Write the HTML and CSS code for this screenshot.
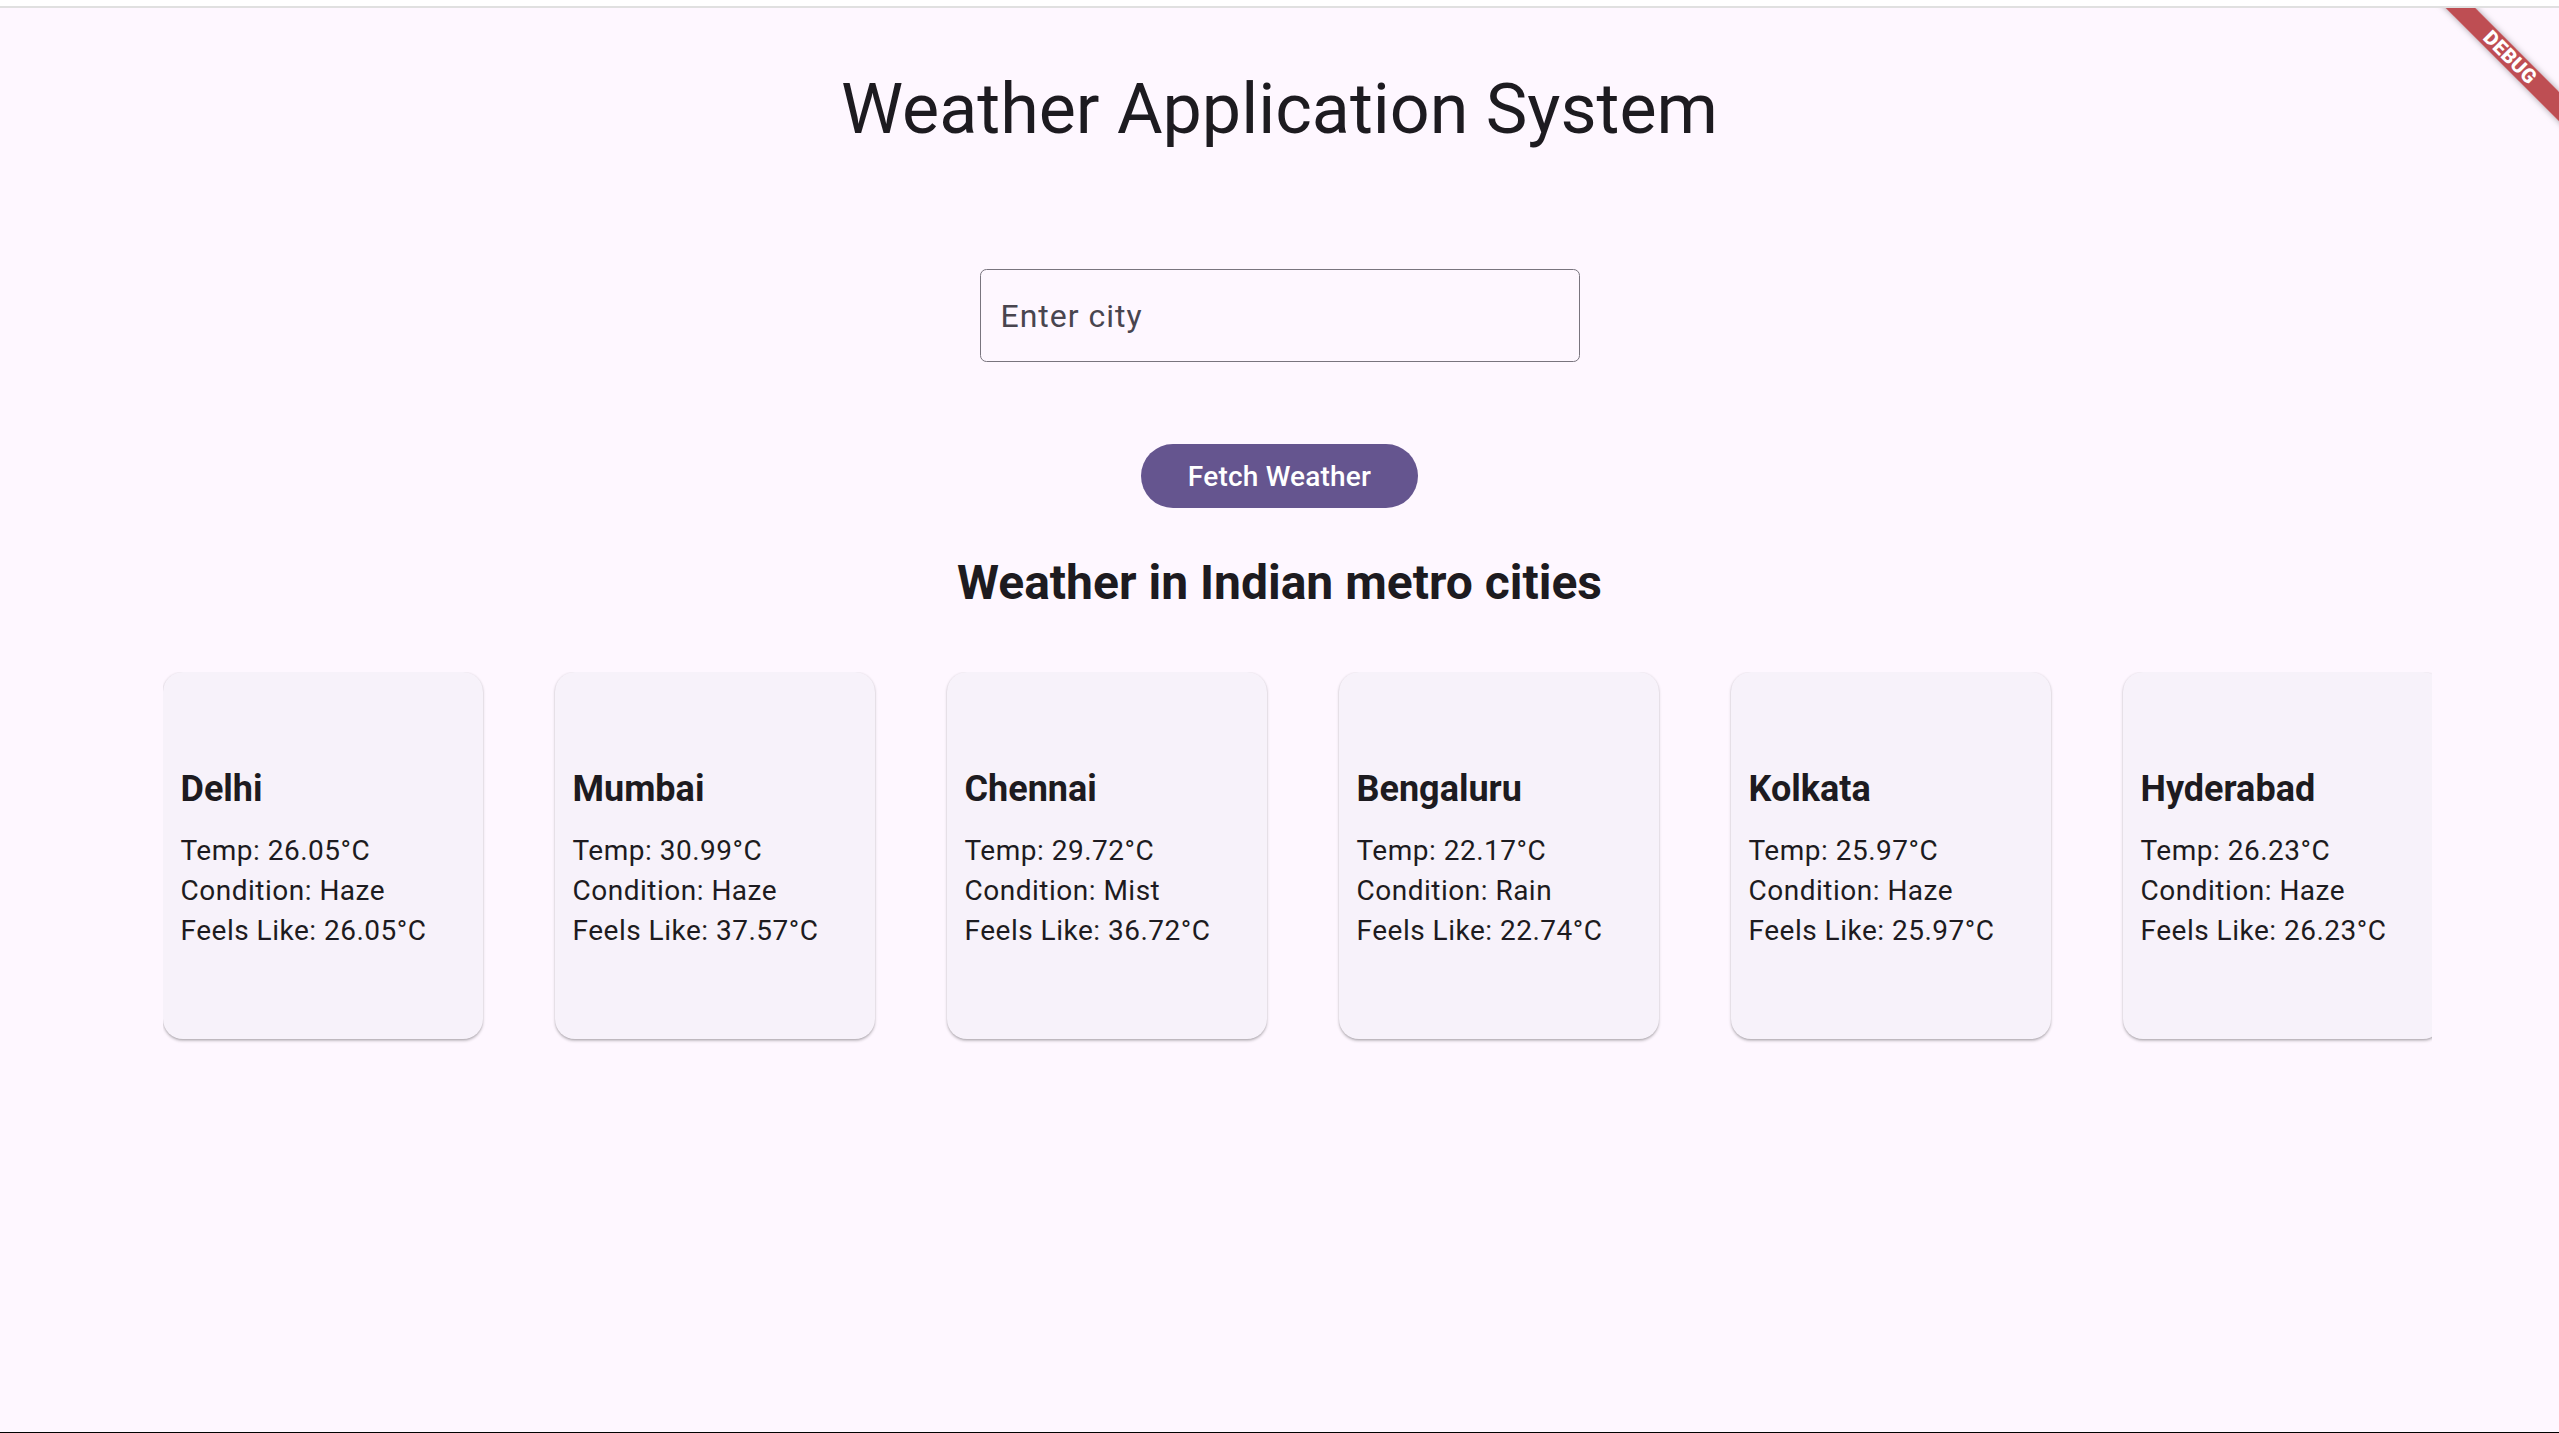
FILE: index.html
```html
<!DOCTYPE html>
<html lang="en">
<head>
<meta charset="utf-8">
<title>Weather Application System</title>
<link rel="stylesheet" href="styles.css">
</head>
<body>
<div class="topstrip"></div>
<main class="app">
  <h1 class="title">Weather Application System</h1>
  <div class="field">
    <input class="field-input" type="text" placeholder="Enter city">
  </div>
  <button class="fetch-btn" type="button">Fetch Weather</button>
  <h2 class="subtitle">Weather in Indian metro cities</h2>
  <div class="cities">
    <div class="card">
      <div class="card-city">Delhi</div>
      <div class="card-line">Temp: 26.05°C</div>
      <div class="card-line">Condition: Haze</div>
      <div class="card-line">Feels Like: 26.05°C</div>
    </div>
    <div class="card">
      <div class="card-city">Mumbai</div>
      <div class="card-line">Temp: 30.99°C</div>
      <div class="card-line">Condition: Haze</div>
      <div class="card-line">Feels Like: 37.57°C</div>
    </div>
    <div class="card">
      <div class="card-city">Chennai</div>
      <div class="card-line">Temp: 29.72°C</div>
      <div class="card-line">Condition: Mist</div>
      <div class="card-line">Feels Like: 36.72°C</div>
    </div>
    <div class="card">
      <div class="card-city">Bengaluru</div>
      <div class="card-line">Temp: 22.17°C</div>
      <div class="card-line">Condition: Rain</div>
      <div class="card-line">Feels Like: 22.74°C</div>
    </div>
    <div class="card">
      <div class="card-city">Kolkata</div>
      <div class="card-line">Temp: 25.97°C</div>
      <div class="card-line">Condition: Haze</div>
      <div class="card-line">Feels Like: 25.97°C</div>
    </div>
    <div class="card">
      <div class="card-city">Hyderabad</div>
      <div class="card-line">Temp: 26.23°C</div>
      <div class="card-line">Condition: Haze</div>
      <div class="card-line">Feels Like: 26.23°C</div>
    </div>
  </div>
  <div class="debug-banner">
    <div class="debug-band">DEBUG</div>
  </div>
</main>
</body>
</html>
```
FILE: styles.css
```css
html, body {
  margin: 0;
  padding: 0;
  height: 100%;
}
body {
  background: #ffffff;
  font-family: Roboto, "Noto Sans", sans-serif;
  color: #1d1b20;
  display: flex;
  flex-direction: column;
  overflow: hidden;
}
.topstrip {
  height: 6px;
  border-bottom: 2px solid #e0e0e0;
  background: #ffffff;
  flex: none;
}
.app {
  position: relative;
  flex: 1;
  background: #fef7ff;
  border-bottom: 1px solid #000000;
  display: flex;
  flex-direction: column;
  align-items: center;
  overflow: hidden;
}
.title {
  margin: 59px 0 0 0;
  font-size: 70px;
  line-height: 85px;
  font-weight: 400;
  color: #1d1b20;
  letter-spacing: 0;
}
.field {
  margin-top: 117px;
  width: 600px;
  height: 93px;
  box-sizing: border-box;
  border: 1.6px solid #79747e;
  border-radius: 6.5px;
  display: flex;
  align-items: center;
}
.field-input {
  width: 100%;
  border: none;
  outline: none;
  background: transparent;
  padding: 0 20px;
  font-family: Roboto, sans-serif;
  font-size: 32px;
  letter-spacing: 1px;
  color: #1d1b20;
}
.field-input::placeholder {
  color: #49454f;
}
.fetch-btn {
  margin-top: 82px;
  height: 64px;
  padding: 0 47px;
  border: none;
  border-radius: 32px;
  background: #65558f;
  color: #ffffff;
  font-family: Roboto, sans-serif;
  font-size: 28px;
  font-weight: 500;
  letter-spacing: 0.2px;
}
.subtitle {
  margin: 46px 0 0 0;
  font-size: 48px;
  line-height: 58px;
  font-weight: 700;
  color: #1d1b20;
}
.cities {
  align-self: flex-start;
  margin: 60px 127px 0 163px;
  width: 2269px;
  display: flex;
  gap: 72px;
  overflow: hidden;
  padding-bottom: 8px;
}
.card {
  flex: none;
  width: 320px;
  height: 367px;
  box-sizing: border-box;
  padding: 6px 17px 0 17.5px;
  background: #f7f2fa;
  border-radius: 20px;
  box-shadow: 0 1.6px 3px rgba(0, 0, 0, 0.22), 0 1px 1.6px rgba(0, 0, 0, 0.1);
  display: flex;
  flex-direction: column;
  justify-content: center;
}
.card-city {
  font-size: 36px;
  line-height: 46px;
  font-weight: 700;
  color: #1d1b20;
  margin-bottom: 19px;
}
.card-line {
  font-size: 28px;
  line-height: 40px;
  letter-spacing: 0.5px;
  color: #1d1b20;
}
.debug-banner {
  position: absolute;
  top: 0;
  right: 0;
  width: 140px;
  height: 140px;
  overflow: hidden;
  pointer-events: none;
}
.debug-band {
  position: absolute;
  left: -9px;
  top: 39px;
  width: 200px;
  height: 21px;
  transform: rotate(45deg);
  background: rgba(176, 40, 45, 0.82);
  box-shadow: 0 0 6px rgba(0, 0, 0, 0.35);
  color: #ffffff;
  font-family: Roboto, sans-serif;
  font-size: 20px;
  font-weight: 900;
  line-height: 21px;
  text-align: center;
  letter-spacing: 0.4px;
}
```
